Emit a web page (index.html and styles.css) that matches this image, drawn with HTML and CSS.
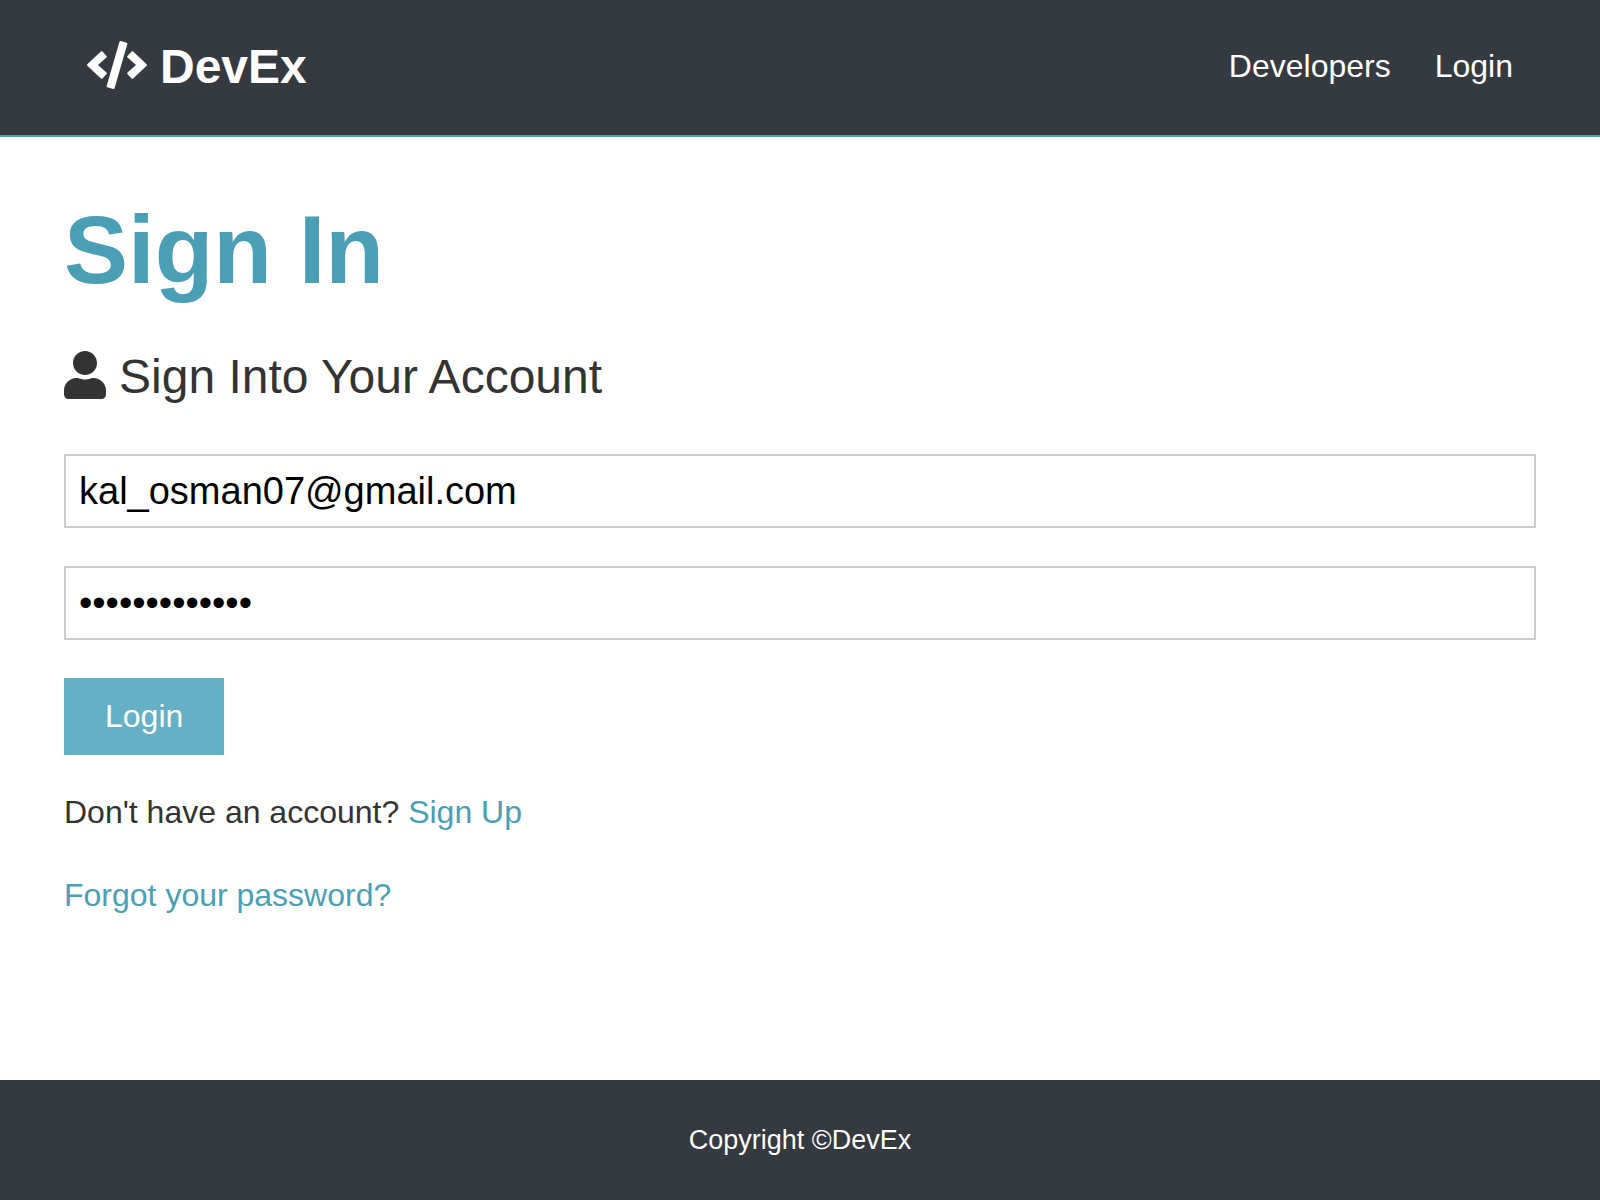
FILE: index.html
```html
<!DOCTYPE html>
<html lang="en">
<head>
<meta charset="utf-8">
<meta name="viewport" content="width=device-width, initial-scale=1">
<title>DevEx | Sign In</title>
<link rel="stylesheet" href="styles.css">
</head>
<body>
<header class="navbar">
  <a class="brand" href="#">
    <svg class="icon icon-code" viewBox="0 0 640 512" aria-hidden="true"><path fill="currentColor" d="M278.9 511.5l-61-17.700c-6.400-1.800-10-8.500-8.200-14.900L346.200 8.700c1.800-6.400 8.500-10 14.900-8.200l61 17.700c6.400 1.800 10 8.500 8.200 14.900L293.800 503.300c-1.900 6.400-8.500 10.100-14.900 8.200zm-114-112.200l43.500-46.400c4.600-4.900 4.300-12.700-.8-17.200L117 256l90.600-79.700c5.100-4.500 5.500-12.300.8-17.200l-43.500-46.400c-4.500-4.800-12.100-5.100-17-.5L3.800 247.200c-5.100 4.700-5.100 12.800 0 17.500l144.100 135.100c4.900 4.600 12.500 4.400 17-.5zm327.200.6l144.100-135.100c5.100-4.700 5.100-12.800 0-17.500L492.100 112.100c-4.800-4.500-12.400-4.300-17 .5L431.600 159c-4.600 4.900-4.300 12.700.8 17.200L523 256l-90.600 79.700c-5.100 4.500-5.500 12.300-.8 17.200l43.500 46.400c4.500 4.900 12.100 5.100 17 .6z"/></svg>
    <span>DevEx</span>
  </a>
  <nav class="nav-links">
    <a href="#">Developers</a>
    <a href="#">Login</a>
  </nav>
</header>
<main class="container">
  <h1 class="title">Sign In</h1>
  <p class="lead">
    <svg class="icon icon-user" viewBox="0 0 448 512" aria-hidden="true"><path fill="currentColor" d="M224 256c70.700 0 128-57.300 128-128S294.700 0 224 0 96 57.300 96 128s57.300 128 128 128zm89.600 32h-16.700c-22.200 10.200-46.900 16-72.900 16s-50.600-5.800-72.900-16h-16.700C60.200 288 0 348.200 0 422.400V464c0 26.500 21.500 48 48 48h352c26.500 0 48-21.500 48-48v-41.600c0-74.200-60.200-134.400-134.400-134.400z"/></svg>
    <span>Sign Into Your Account</span>
  </p>
  <form class="form">
    <input class="field" type="email" aria-label="Email Address" value="kal_osman07@gmail.com">
    <input class="field" type="password" aria-label="Password" value="password12345">
    <button class="btn" type="button">Login</button>
  </form>
  <p class="note">Don't have an account? <a href="#">Sign Up</a></p>
  <p class="note"><a href="#">Forgot your password?</a></p>
</main>
<footer class="footer">Copyright ©DevEx</footer>
</body>
</html>
```
FILE: styles.css
```css
* {
  box-sizing: border-box;
  margin: 0;
  padding: 0;
}

body {
  display: flex;
  flex-direction: column;
  min-height: 100vh;
  background: #fff;
  color: #333;
  font: 32px/51px "Liberation Sans", Arial, sans-serif;
}

a {
  color: #4b9fb5;
  text-decoration: none;
}

.icon {
  flex: none;
  height: 48px;
  margin-bottom: 4px;
}

.icon-code {
  width: 60px;
}

.icon-user {
  width: 42px;
}

.navbar {
  display: flex;
  align-items: center;
  justify-content: space-between;
  padding: 28px 87px 30px;
  background: #353940;
  border-bottom: 2px solid #4b9fb5;
}

.navbar a {
  color: #fff;
}

.brand {
  display: flex;
  align-items: center;
  gap: 13px;
  font-size: 48px;
  font-weight: bold;
  line-height: 77px;
}

.nav-links {
  display: flex;
  gap: 44px;
}

.container {
  flex: 1;
  padding: 56px 64px;
}

.title {
  margin-bottom: 32px;
  color: #4b9fb5;
  font-size: 96px;
  line-height: 114px;
}

.lead {
  display: flex;
  align-items: center;
  gap: 13px;
  margin-bottom: 39px;
  font-size: 48px;
  line-height: 76px;
}

.form {
  display: flex;
  flex-direction: column;
  align-items: flex-start;
  gap: 38px;
  margin-bottom: 32px;
}

.field {
  width: 100%;
  height: 74px;
  padding: 0 13px;
  border: 2px solid #ccc;
  background: #fff;
  color: #000;
  font-family: inherit;
  font-size: 38px;
}

.btn {
  padding: 13px 41px;
  border: 0;
  background: #65b0c4;
  color: #fff;
  font: inherit;
}

.note {
  margin-bottom: 32px;
}

.footer {
  padding: 35px 32px 34px;
  background: #353940;
  color: #fff;
  font-size: 27px;
  text-align: center;
}
```
